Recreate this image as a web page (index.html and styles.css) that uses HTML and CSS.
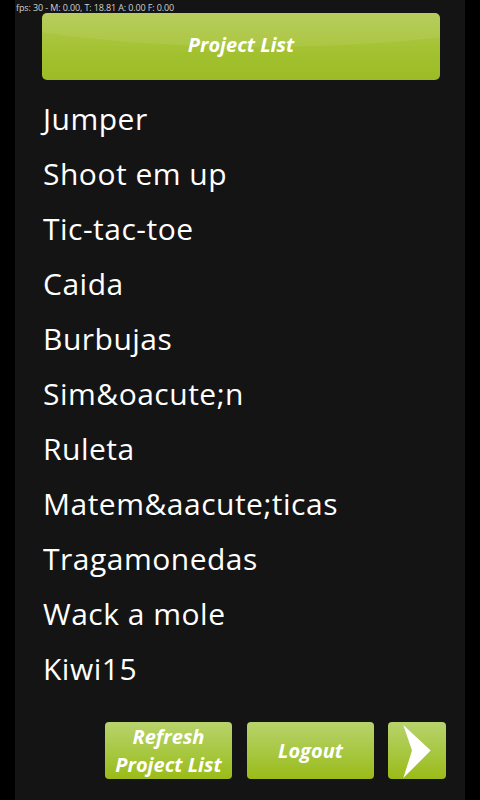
FILE: index.html
```html
<!DOCTYPE html>
<html>
<head>
<meta charset="utf-8">
<link rel="stylesheet" href="styles.css">
</head>
<body>
<div class="screen">
  <div class="fps">fps: 30 - M: 0.00, T: 18.81 A: 0.00 F: 0.00</div>
  <div class="header-btn"><span>Project List</span></div>
  <ul class="list">
    <li>Jumper</li>
    <li>Shoot em up</li>
    <li>Tic-tac-toe</li>
    <li>Caida</li>
    <li>Burbujas</li>
    <li>Sim&amp;oacute;n</li>
    <li>Ruleta</li>
    <li>Matem&amp;aacute;ticas</li>
    <li>Tragamonedas</li>
    <li>Wack a mole</li>
    <li>Kiwi15</li>
  </ul>
  <div class="actions">
    <div class="btn wide">Refresh<br>Project List</div>
    <div class="btn wide">Logout</div>
    <div class="btn arrow">
      <svg width="58" height="57" viewBox="0 0 58 57">
        <path d="M15.3 3 L42.7 28.5 L15.3 56 L24 28.5 Z" fill="#fff"/>
      </svg>
    </div>
  </div>
</div>
</body>
</html>
```
FILE: styles.css
```css
html, body {
  margin: 0;
  padding: 0;
  background: #000;
}
.screen {
  position: relative;
  margin-left: 15px;
  width: 450px;
  height: 800px;
  background: #141414;
  display: flex;
  flex-direction: column;
  font-family: "Open Sans", sans-serif;
}
.fps {
  position: absolute;
  left: 1px;
  top: 2px;
  font-family: "Open Sans", sans-serif;
  font-size: 9px;
  line-height: 11px;
  letter-spacing: -0.12px;
  color: #d0d0d0;
}
.header-btn {
  position: relative;
  overflow: hidden;
  margin: 13px 0 0 27px;
  width: 398px;
  height: 67px;
  border-radius: 5px;
  background: linear-gradient(#b2ca52, #a3c12f 60%, #9cbc26);
  display: flex;
  align-items: center;
  justify-content: center;
}
.header-btn::before {
  content: "";
  position: absolute;
  left: -40%;
  top: -190%;
  width: 190%;
  height: 240%;
  border-radius: 50%;
  background: rgba(255, 255, 255, 0.07);
}
.header-btn span {
  position: relative;
  top: -2px;
  color: #fff;
  font-weight: bold;
  font-style: italic;
  font-size: 20px;
}
.list {
  list-style: none;
  margin: 12px 0 0 0;
  padding: 0 0 0 28px;
}
.list li {
  color: #fff;
  font-size: 30px;
  letter-spacing: 0.5px;
  height: 55px;
  line-height: 54px;
}
.actions {
  margin-top: auto;
  margin-bottom: 21px;
  padding-right: 19px;
  display: flex;
  justify-content: flex-end;
  gap: 15px;
}
.btn {
  height: 57px;
  border-radius: 4px;
  background: linear-gradient(#b8d36c, #a8c844 50%, #9bbb18);
  color: #fff;
  font-weight: bold;
  font-style: italic;
  font-size: 20px;
  line-height: 28px;
  text-align: center;
  display: flex;
  align-items: center;
  justify-content: center;
}
.wide {
  width: 127px;
}
.arrow {
  width: 58px;
  margin-left: -1px;
}
.arrow svg {
  display: block;
}
```
